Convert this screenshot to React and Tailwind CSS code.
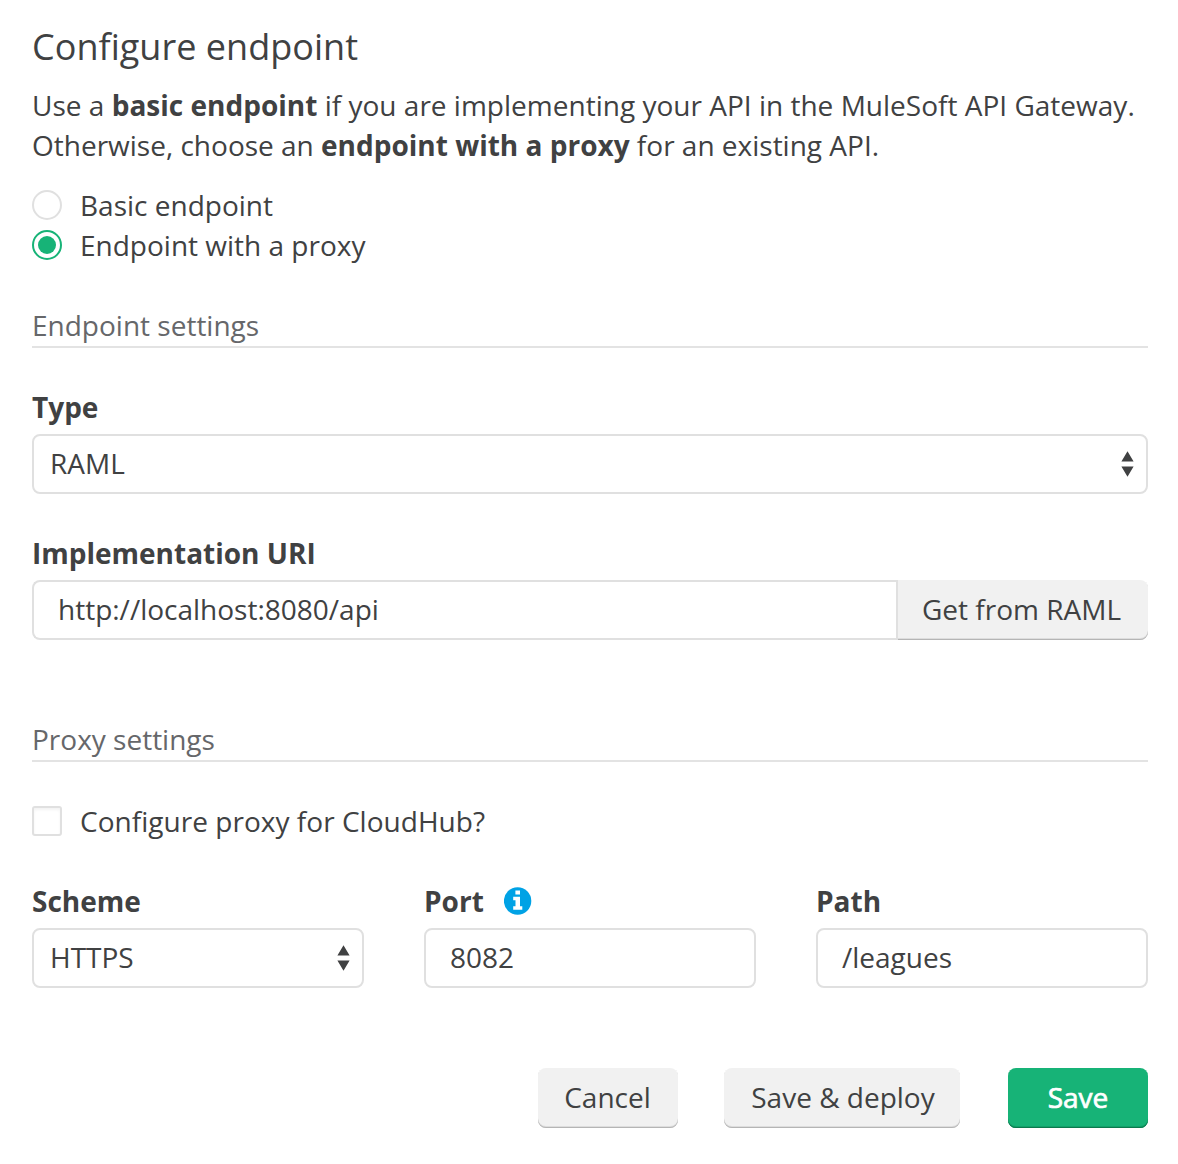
const line = "border-2 border-[#e0e0e0] rounded-lg";
const greyButton = "rounded-lg bg-[#f1f1f1] shadow-[inset_0_-1px_#b5b5b5,inset_0_-2px_#dddddd]";

function Arrows() {
  return (
    <svg width="13" height="26" viewBox="0 0 13 26" fill="#404142">
      <path d="M6.5 0.3L12.6 10.6H0.4Z M0.4 15.4H12.6L6.5 25.7Z" />
    </svg>
  );
}

function Section({ children, className }) {
  return (
    <h2 className={`h-[43px] border-b-2 border-[#e3e3e3] text-[#66676a] leading-[40px] ${className}`}>{children}</h2>
  );
}

function Select({ value }) {
  return (
    <div className={`mt-[7px] flex h-[60px] items-center justify-between pl-4 pr-3 ${line}`}>
      <span className="pb-[2px]">{value}</span>
      <Arrows />
    </div>
  );
}

function Input({ value }) {
  return <div className={`mt-[7px] flex h-[60px] items-center pb-[2px] pl-6 ${line}`}>{value}</div>;
}

function Info() {
  return (
    <svg width="28" height="28" viewBox="0 0 28 28" className="mb-px ml-5">
      <circle cx="13.6" cy="14" r="13.7" fill="#00a2e5" />
      <path fill="#fff" d="M11.4 3.6H16V7.5H11.4Z M9.2 9.7H16V19.2H18.3V22.7H9.2V19.2H11.5V13.2H9.2Z" />
    </svg>
  );
}

function Label({ children }) {
  return <div className="flex h-10 items-center font-bold leading-[40px]">{children}</div>;
}

export default function App() {
  return (
    <main className="h-[1164px] w-[1178px] bg-white pl-8 pr-[30px] pt-[22px] font-['Open_Sans',sans-serif] text-[28px] leading-[40px] text-[#404142]">
      <h1 className="h-[63px] text-[36px] leading-[50px] tracking-[0.03px]">Configure endpoint</h1>
      <p className="whitespace-nowrap tracking-[0.01px]">
        Use a <b>basic endpoint</b> if you are implementing your API in the MuleSoft API Gateway.
        <br />
        <span className="tracking-normal">
          Otherwise, choose an <b>endpoint with a proxy</b> for an existing API.
        </span>
      </p>
      <div className="mt-5 flex items-center gap-[18px]">
        <span className="size-[30px] rounded-full border-2 border-[#e0e0e0]" />
        <span>Basic endpoint</span>
      </div>
      <div className="flex items-center gap-[18px]">
        <span className="flex size-[30px] items-center justify-center rounded-full border-2 border-[#17b377]">
          <span className="size-[18px] rounded-full bg-[#17b377]" />
        </span>
        <span>Endpoint with a proxy</span>
      </div>
      <Section className="mt-10">Endpoint settings</Section>
      <div className="mt-[39px]">
        <Label>Type</Label>
        <Select value="RAML" />
      </div>
      <div className="mt-[39px]">
        <Label>Implementation URI</Label>
        <div className="mt-[7px] flex h-[60px]">
          <div className="flex w-[864px] items-center rounded-l-lg border-2 border-r-0 border-[#e0e0e0] pb-[2px] pl-6">http://localhost:8080/api</div>
          <div className="w-[2px] bg-[#e0e0e0]" />
          <button className="flex-1 rounded-r-lg bg-[#f1f1f1] pb-[2px] pr-[3px] shadow-[inset_0_-1px_#b5b5b5,inset_0_-2px_#dddddd]">Get from RAML</button>
        </div>
      </div>
      <Section className="mt-[79px]">Proxy settings</Section>
      <div className="mt-[39px] flex items-center gap-[18px]">
        <span className="size-[30px] rounded-[3px] border-2 border-[#e0e0e0] shadow-[inset_0_2px_3px_#f3f3f3]" />
        <span className="tracking-[0.03px]">Configure proxy for CloudHub?</span>
      </div>
      <div className="mt-10 grid grid-cols-3 gap-[60px]">
        <div>
          <Label>Scheme</Label>
          <Select value="HTTPS" />
        </div>
        <div>
          <Label>Port <Info /></Label>
          <Input value="8082" />
        </div>
        <div>
          <Label>Path</Label>
          <Input value="/leagues" />
        </div>
      </div>
      <div className="mt-20 flex h-[60px] justify-end">
        <button className={`w-[140px] pb-[2px] pr-px ${greyButton}`}>Cancel</button>
        <button className={`ml-[46px] w-[236px] pb-[2px] pl-[2px] ${greyButton}`}>Save &amp; deploy</button>
        <button className="ml-12 w-[140px] rounded-lg bg-[#17b377] pb-[2px] text-white shadow-[inset_0_-1px_#0b7a4d,inset_0_-2px_#13a06a] [-webkit-text-stroke:0.7px_white]">Save</button>
      </div>
    </main>
  );
}
